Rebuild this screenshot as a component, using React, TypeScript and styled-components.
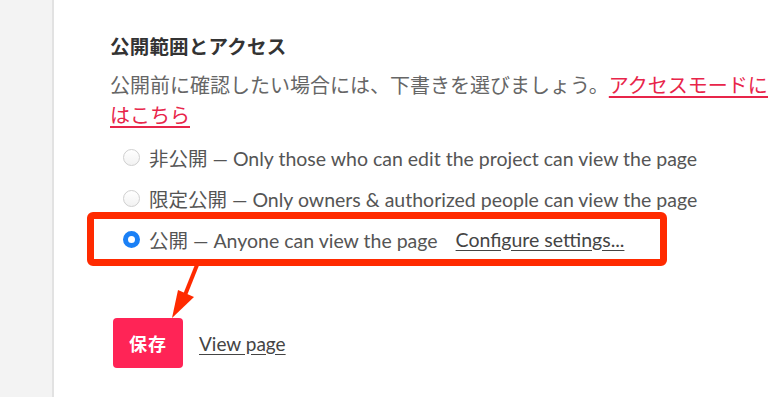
import styled, { createGlobalStyle } from "styled-components";

const GlobalStyle = createGlobalStyle`
  html, body {
    margin: 0;
    padding: 0;
    height: 397px;
    overflow: hidden;
    background: #fff;
  }
  body {
    font-family: "Lato", "Noto Sans CJK JP", sans-serif;
  }
`;

const Page = styled.div`
  display: flex;
  width: 768px;
  height: 397px;
  overflow: hidden;
`;

const Sidebar = styled.aside`
  flex: 0 0 52px;
  background: #f3f3f3;
  border-right: 2px solid #e2e2e2;
`;

const Main = styled.main`
  flex: 1 0 auto;
  padding: 32px 0 0 56px;
  color: #333;
`;

const Heading = styled.h2`
  margin: 0;
  font-size: 19.5px;
  line-height: 30px;
  font-weight: 700;
  color: #333;
  letter-spacing: 0.2px;
`;

const Description = styled.p`
  margin: 8px 0 0;
  width: 766px;
  font-size: 20px;
  line-height: 30px;
  color: #666;
`;

const Link = styled.a`
  color: #e8254a;
  text-decoration: underline;
  text-underline-offset: 3px;
`;

const Options = styled.div`
  display: flex;
  flex-direction: column;
  gap: 1px;
  margin-top: 7px;
  padding-left: 13px;
`;

const Option = styled.label<{ $highlight?: boolean }>`
  position: relative;
  display: flex;
  align-items: center;
  width: fit-content;
  height: 40px;
  font-size: 19.5px;
  color: #666;

  ${(p) =>
    p.$highlight &&
    `
    &::before {
      content: "";
      position: absolute;
      top: -7px;
      bottom: -7px;
      left: -36px;
      right: -43px;
      border: 7px solid #ff2a00;
      border-radius: 6px;
      pointer-events: none;
    }
  `}
`;

const Radio = styled.span<{ $checked?: boolean }>`
  flex: 0 0 17px;
  box-sizing: border-box;
  width: 17px;
  height: 17px;
  border-radius: 50%;
  margin-right: 9px;
  ${(p) =>
    p.$checked
      ? `
    border: 5px solid #1a80f6;
    background: #fff;
  `
      : `
    background: linear-gradient(#fff, #f2f2f2);
    border: 1px solid #cfcfcf;
  `}
`;

const Label = styled.span`
  color: #555;
`;

const Configure = styled.a`
  margin-left: 18px;
  color: #444;
  text-decoration: underline;
  text-underline-offset: 3px;
`;

const Actions = styled.div`
  position: relative;
  display: flex;
  align-items: center;
  gap: 16px;
  margin-top: 59px;
  margin-left: 3px;
`;

const SaveButton = styled.button`
  width: 70px;
  height: 50px;
  border: none;
  border-radius: 4px;
  background: #ff2456;
  color: #fff;
  font-family: "Noto Sans CJK JP", sans-serif;
  font-size: 18px;
  font-weight: 700;
  letter-spacing: 1px;
`;

const ViewLink = styled.a`
  font-size: 19px;
  color: #444;
  text-decoration: underline;
  text-underline-offset: 3px;
`;

const Arrow = styled.svg`
  position: absolute;
  left: 52px;
  top: -53px;
  pointer-events: none;
`;

export default function App() {
  return (
    <>
      <GlobalStyle />
      <Page>
        <Sidebar />
        <Main>
          <Heading>公開範囲とアクセス</Heading>
          <Description>
            公開前に確認したい場合には、下書きを選びましょう。
            <Link>アクセスモードに関する詳細はこちら</Link>
          </Description>
          <Options>
            <Option>
              <Radio />
              <Label>非公開 — Only those who can edit the project can view the page</Label>
            </Option>
            <Option>
              <Radio />
              <Label>限定公開 — Only owners &amp; authorized people can view the page</Label>
            </Option>
            <Option $highlight>
              <Radio $checked />
              <Label>公開 — Anyone can view the page</Label>
              <Configure>Configure settings...</Configure>
            </Option>
          </Options>
          <Actions>
            <SaveButton>保存</SaveButton>
            <ViewLink>View page</ViewLink>
            <Arrow width="40" height="56" viewBox="0 0 40 56">
              <line x1="32" y1="0" x2="20" y2="30" stroke="#ff2a00" strokeWidth="4" />
              <polygon points="7,53 13,25 29,32" fill="#ff2a00" />
            </Arrow>
          </Actions>
        </Main>
      </Page>
    </>
  );
}
